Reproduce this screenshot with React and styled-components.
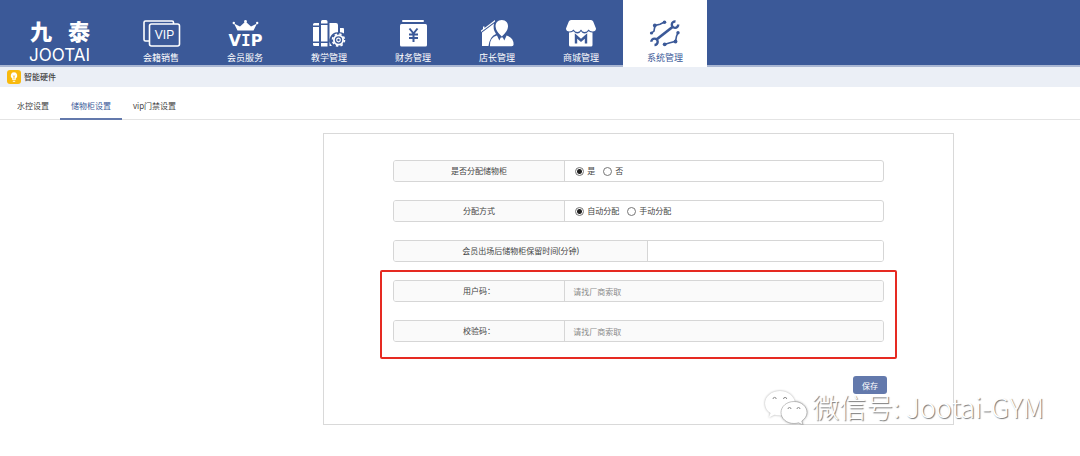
import React, { useState } from "react";
import styled, { createGlobalStyle } from "styled-components";

const BLUE = "#3b5998";

// Top navigation icons, all drawn on a 38x28 grid
const CardIcon = () => (
  <Icon viewBox="0 0 38 28">
    <g fill="none" stroke="currentColor" strokeWidth="1.6">
      <path d="M7 21H3.500a1.500 1.500 0 0 1-1.500-1.500V2.500A1.500 1.500 0 0 1 3.500 1H30a1.500 1.500 0 0 1 1.500 1.500V4" />
      <rect x="7.500" y="4" width="30" height="22" rx="2" />
    </g>
    <text x="22.500" y="19" fontSize="12" textAnchor="middle" fill="currentColor" fontFamily="Liberation Sans, sans-serif">
      VIP
    </text>
  </Icon>
);

const CrownIcon = () => (
  <Icon viewBox="0 0 38 28">
    <g fill="currentColor">
      <path d="M8 3.500l6 3 5.500-5 5.500 5 6-3-3.500 7h-16z" />
      <circle cx="7.800" cy="3" r="1.200" />
      <circle cx="19.500" cy="1.400" r="1.400" />
      <circle cx="31.200" cy="3" r="1.200" />
      <text x="19.500" y="26" fontSize="16" fontWeight="bold" textAnchor="middle" fontFamily="DejaVu Sans, sans-serif">
        V<tspan fontFamily="DejaVu Sans Mono, monospace">I</tspan>P
      </text>
    </g>
  </Icon>
);

const BooksIcon = () => (
  <Icon viewBox="0 0 38 28">
    <g fill="currentColor">
      <path d="M3 4.500Q3 3 4.500 3H9v2.500H3zM3 7h6v14.500H3zM3 23h6v3H4.500Q3 26 3 24.500z" />
      <path d="M11 1.500Q11 0 12.500 0H16q1.500 0 1.500 1.500v2H11zM11 5h6.500v16.500H11zM11 23h6.500v3.500H11z" />
      <path d="M19.500 3H26q2 0 2 2v7.300a8 8 0 0 0-6 13.700h-2.500z" />
      <path d="M30 8h3q1 0 1 1v4.500q-2-1.200-4-1.200z" />
    </g>
    <g fill="none" stroke="currentColor">
      <circle cx="28.500" cy="20" r="4.600" strokeWidth="1.800" />
      <circle cx="28.500" cy="20" r="6" strokeWidth="1.600" strokeDasharray="2.400 2.312" />
      <circle cx="28.500" cy="20" r="1.800" strokeWidth="1.200" />
    </g>
  </Icon>
);

const MoneyIcon = () => (
  <Icon viewBox="0 0 38 28">
    <rect x="8" y="0" width="22" height="2" rx="1" fill="currentColor" />
    <rect x="6" y="4" width="27" height="22.500" rx="1.500" fill="currentColor" />
    <path d="M15.500 8.500l4 5 4-5M19.500 13.500v8.500M15 14.500h9M15 18h9" fill="none" stroke={BLUE} strokeWidth="2" />
  </Icon>
);

const ManagerIcon = () => (
  <Icon viewBox="0 0 38 28">
    <g fill="currentColor">
      <path d="M3 10.500L5 9V6.500h1.500V8L17 0v1.500L3 12z" />
      <path d="M4 12.500L16 3.500q-1.500 5.500 2 10.500-6 2-7.500 12H4z" />
      <path d="M23.800 0c4.200 0 6.500 3 6.200 6.800-.3 3.500-2.500 6-4.200 7.700l-2 2-2-2c-1.700-1.700-3.900-4.200-4.200-7.700C17.300 3 19.600 0 23.800 0z" />
      <path d="M12 26.300q-.5-8.800 7-10.800l2.300 5 1.500-3h2l1.500 3 2.300-5q7 2 7 9 0 1.800-2 1.800z" />
    </g>
  </Icon>
);

const StoreIcon = () => (
  <Icon viewBox="0 0 38 28">
    <g fill="currentColor">
      <path d="M9 0h20q1.500 0 2.200 1.500L34 8.500q0 3-3.500 3-2.500 0-4-2-1.500 2.500-3.800 2.500T19 9.500q-1.500 2.500-3.700 2.500t-3.800-2.500q-1.500 2-4 2-3.500 0-3.500-3l2.800-7Q7.500 0 9 0z" />
      <path d="M7 12.500q2.500 0 4.500-1.200 2 2.200 4 2.200t3.500-2.200q1.500 2.200 3.500 2.200t4-2.200q2 1.200 4 1.200V25q0 1.500-1.500 1.500H8.500Q7 26.500 7 25z" />
    </g>
    <path d="M14 23.500v-7.500l5 4.500 5-4.500v7.500" fill="none" stroke={BLUE} strokeWidth="2.400" />
  </Icon>
);

const SystemIcon = () => (
  <Icon viewBox="0 0 38 28">
    <g fill="none" stroke="currentColor">
      <path d="M5 13.500L8 11l1-5.500 5-1.200 4-2" strokeWidth="1.600" />
      <path d="M19 24.300l5-1.500 5.500-1.500 1-5 1.500-3.500" strokeWidth="1.600" />
      <path d="M10.500 19.500L26.500 7" strokeWidth="2.800" />
      <path d="M29.500 1.500A3.200 3.200 0 1 0 32.200 4.500" strokeWidth="2.400" />
      <path d="M5.300 21.800A3.200 3.200 0 1 1 8.500 25" strokeWidth="2.400" />
    </g>
    <g fill="currentColor">
      <circle cx="5.500" cy="13" r="1.600" />
      <circle cx="8.800" cy="5.500" r="1.900" />
      <circle cx="18.500" cy="2.200" r="1.800" />
      <circle cx="32" cy="12.800" r="1.700" />
      <circle cx="29.500" cy="21.500" r="1.900" />
      <circle cx="18.700" cy="24.300" r="1.900" />
    </g>
  </Icon>
);

const WechatIcon = () => (
  <WechatSvg viewBox="0 0 44 36">
    <g fill="#fff">
      <path d="M16 1C7.500 1 1 6.500 1 13.500c0 4 2 7.300 5.500 9.500L5 27.500l5.500-2.800q3 .8 6 .8C25 25.500 31 20 31 13.500S24.500 1 16 1z" />
      <path
        d="M30 11.500c-7.200 0-13 4.900-13 11s5.800 11 13 11q2.500 0 4.500-.7L39 35l-1.200-4c3-2 5.200-5 5.200-8.500 0-6.100-5.800-11-13-11z"
        stroke="#999"
        strokeWidth="0.600"
      />
    </g>
    <g fill="none" stroke="#8c8c8c">
      <path d="M9 9a1.600 1.600 0 0 1 3.200 0M19.500 9a1.600 1.600 0 0 1 3.200 0" />
      <path d="M24 19a1.500 1.500 0 0 1 3 0M33 19a1.500 1.500 0 0 1 3 0" />
    </g>
  </WechatSvg>
);

const navItems = [
  { label: "会籍销售", icon: CardIcon },
  { label: "会员服务", icon: CrownIcon },
  { label: "教学管理", icon: BooksIcon },
  { label: "财务管理", icon: MoneyIcon },
  { label: "店长管理", icon: ManagerIcon },
  { label: "商城管理", icon: StoreIcon },
  { label: "系统管理", icon: SystemIcon },
];

const tabs = ["水控设置", "储物柜设置", "vip门禁设置"];

export default function App() {
  const [activeNav, setActiveNav] = useState("系统管理");
  const [activeTab, setActiveTab] = useState("储物柜设置");
  const [enabled, setEnabled] = useState("是");
  const [mode, setMode] = useState("自动分配");
  const [minutes, setMinutes] = useState("");

  const handleSubmit = (e) => {
    e.preventDefault();
  };

  return (
    <>
      <GlobalStyle />
      <Header>
        <Logo>
          <LogoName>
            <span>九</span>
            <span>泰</span>
          </LogoName>
          <LogoLatin>JOOTAI</LogoLatin>
        </Logo>
        <Nav>
          {navItems.map(({ label, icon: NavIcon }) => (
            <NavLink key={label} href="#" $active={label === activeNav} onClick={() => setActiveNav(label)}>
              <NavIcon />
              {label}
            </NavLink>
          ))}
        </Nav>
      </Header>

      <TitleBar>
        <Bulb viewBox="0 0 14 14">
          <rect width="14" height="14" rx="3" fill="#f8b90d" />
          <path d="M7 2.300a3.300 3.300 0 0 0-1.700 6.100V10h3.400V8.400A3.300 3.300 0 0 0 7 2.300zM5.800 10.700h2.400v1H5.800z" fill="#fff" />
          <path d="M7 9.500V6.500M5.800 5.500L7 6.600l1.200-1.100" fill="none" stroke="#f8b90d" strokeWidth="0.800" />
        </Bulb>
        <Title>智能硬件</Title>
      </TitleBar>

      <Tabs>
        {tabs.map((tab) => (
          <Tab key={tab} type="button" $active={tab === activeTab} onClick={() => setActiveTab(tab)}>
            {tab}
          </Tab>
        ))}
      </Tabs>

      <Panel onSubmit={handleSubmit}>
        <Row role="radiogroup" aria-labelledby="enabled-label">
          <RowLabel as="span" id="enabled-label">是否分配储物柜</RowLabel>
          <Options>
            {["是", "否"].map((value) => (
              <Option key={value}>
                <Radio name="enabled" checked={enabled === value} onChange={() => setEnabled(value)} />
                {value}
              </Option>
            ))}
          </Options>
        </Row>
        <Row role="radiogroup" aria-labelledby="mode-label">
          <RowLabel as="span" id="mode-label">分配方式</RowLabel>
          <Options>
            {["自动分配", "手动分配"].map((value) => (
              <Option key={value}>
                <Radio name="mode" checked={mode === value} onChange={() => setMode(value)} />
                {value}
              </Option>
            ))}
          </Options>
        </Row>
        <Row>
          <RowLabel htmlFor="minutes" $wide>会员出场后储物柜保留时间(分钟)</RowLabel>
          <TextInput id="minutes" value={minutes} onChange={(e) => setMinutes(e.target.value)} />
        </Row>
        <Highlight>
          <Row>
            <RowLabel htmlFor="user-code">用户码：</RowLabel>
            <TextInput id="user-code" placeholder="请找厂商索取" readOnly />
          </Row>
          <Row>
            <RowLabel htmlFor="check-code">校验码：</RowLabel>
            <TextInput id="check-code" placeholder="请找厂商索取" readOnly />
          </Row>
        </Highlight>
        <SaveButton type="submit">保存</SaveButton>

        <Watermark>
          <WechatIcon />
          <span>微信号: Jootai-GYM</span>
        </Watermark>
      </Panel>
    </>
  );
}

const GlobalStyle = createGlobalStyle`
  * {
    box-sizing: border-box;
  }

  body {
    margin: 0;
    background-color: #fff;
    color: #444;
    font-family: "Noto Sans", "Noto Sans CJK SC", sans-serif;
    font-size: 8px;
    line-height: 12px;
  }

  button,
  input {
    font-family: inherit;
    font-size: inherit;
  }
`;

const Header = styled.header`
  display: flex;
  height: 67px;
  background-color: ${BLUE};
  border-bottom: 2px solid #a9b6d2;
`;

const Logo = styled.div`
  width: 119px;
  padding: 19px 0 0 29px;
  color: white;
`;

const LogoName = styled.div`
  display: flex;
  gap: 16px;
  padding-left: 1px;
  font-size: 22px;
  font-weight: 900;
  line-height: 24px;
`;

const LogoLatin = styled.div`
  font-family: Inter, sans-serif;
  font-size: 17px;
  line-height: 24px;
`;

const Nav = styled.nav`
  display: flex;
`;

const NavLink = styled.a`
  display: flex;
  flex-direction: column;
  align-items: center;
  gap: 3px;
  width: 84px;
  height: 67px;
  padding-top: 20px;
  background-color: ${(props) => (props.$active ? "white" : "transparent")};
  color: ${(props) => (props.$active ? BLUE : "white")};
  font-size: 9px;
  line-height: 14px;
  text-decoration: none;
`;

const Icon = styled.svg`
  width: 38px;
  height: 28px;
  overflow: visible;
`;

const TitleBar = styled.div`
  display: flex;
  align-items: center;
  gap: 3px;
  height: 20px;
  padding-left: 7px;
  background-color: #ebeff6;
`;

const Bulb = styled.svg`
  width: 14px;
  height: 14px;
`;

const Title = styled.h1`
  margin: 0;
  font-size: 8px;
  font-weight: 500;
`;

const Tabs = styled.div`
  display: flex;
  height: 33px;
  padding-left: 6px;
  border-bottom: 1px solid #e4e4e4;
`;

const Tab = styled.button`
  margin-bottom: -1px;
  padding: 6px 11px 0;
  border: none;
  border-bottom: 2px solid ${(props) => (props.$active ? "#6379ac" : "transparent")};
  background: none;
  color: ${(props) => (props.$active ? BLUE : "#444")};
  cursor: pointer;
`;

const Panel = styled.form`
  position: relative;
  display: flex;
  flex-direction: column;
  gap: 18px;
  margin: 13px 126px 0 323px;
  padding: 26px 69px 30px;
  border: 1px solid #d9d9d9;
`;

const Row = styled.div`
  display: flex;
  height: 22px;
  border: 1px solid #d6d6d6;
  border-radius: 3px;
  overflow: hidden;
`;

const RowLabel = styled.label`
  display: flex;
  align-items: center;
  justify-content: center;
  width: ${(props) => (props.$wide ? "52%" : "35%")};
  border-right: 1px solid #d6d6d6;
  background-color: #fafafa;
`;

const Options = styled.div`
  display: flex;
  align-items: center;
  gap: 8px;
  padding-left: 10px;
`;

const Option = styled.label`
  display: flex;
  align-items: center;
  gap: 3px;
`;

const Radio = styled.input.attrs({ type: "radio" })`
  appearance: none;
  width: 9px;
  height: 9px;
  margin: 0;
  border: 1px solid #767676;
  border-radius: 50%;
  background-color: white;

  &:checked {
    background-image: radial-gradient(circle, #222 0 2px, transparent 3px);
  }
`;

const TextInput = styled.input`
  flex: 1;
  min-width: 0;
  padding: 0 8px;
  border: none;
  outline: none;
  background-color: ${(props) => (props.readOnly ? "#fafafa" : "white")};

  &::placeholder {
    color: #8c8c8c;
  }
`;

/* Red frame around the two vendor codes */
const Highlight = styled.div`
  position: relative;
  display: flex;
  flex-direction: column;
  gap: 18px;

  &::after {
    content: "";
    position: absolute;
    inset: -10px -13px -17px;
    border: 2px solid #e62a22;
    border-radius: 2px;
    pointer-events: none;
  }
`;

const SaveButton = styled.button`
  align-self: flex-end;
  width: 34px;
  height: 18px;
  margin: 16px -3px 0 0;
  padding: 0;
  border: none;
  border-radius: 3px;
  background-color: #6379ac;
  color: white;
  cursor: pointer;
`;

const Watermark = styled.div`
  position: absolute;
  right: -91px;
  bottom: -2px;
  display: flex;
  align-items: flex-start;
  gap: 4px;
  color: white;
  font-family: "Noto Sans CJK SC", sans-serif;
  font-size: 27px;
  font-weight: 300;
  line-height: 34px;
  text-shadow: 1px 1px 1px #777;
  white-space: nowrap;
  pointer-events: none;
`;

const WechatSvg = styled.svg`
  width: 44px;
  height: 36px;
  filter: drop-shadow(0 0 1px #aaa);
`;
